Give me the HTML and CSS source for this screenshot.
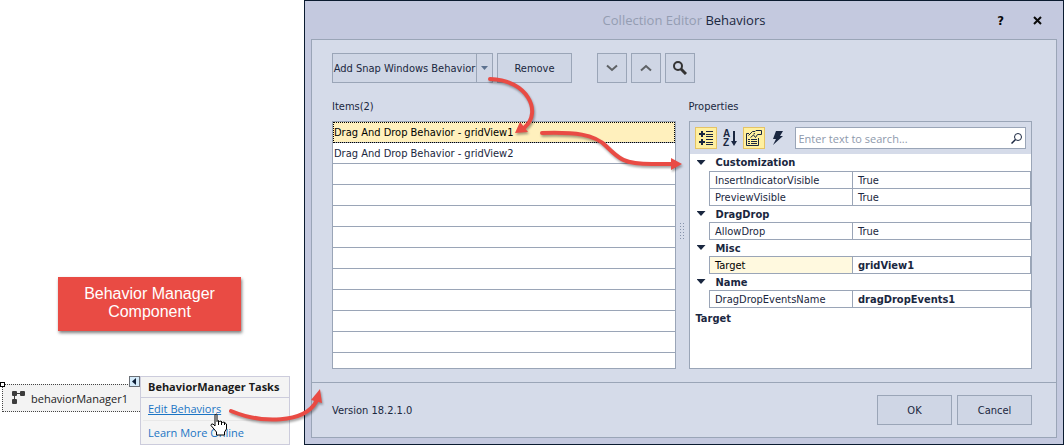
FILE: index.html
```html
<!DOCTYPE html>
<html lang="en">
<head>
    <meta charset="UTF-8">
    <meta name="viewport" content="width=device-width, initial-scale=1.0">
    <title>Collection Editor</title>
    <link rel="stylesheet" href="styles.css">
</head>
<body>
    <div class="designer">
        <div class="callout">Behavior Manager<br>Component</div>
        <div class="tray">
            <div class="component">
                <span class="handle"></span>
                <svg class="component-icon" width="14" height="14" viewBox="0 0 14 14">
                    <path d="M3 2.500H11M2.500 3V11" fill="none" stroke="#3c3c3c"/>
                    <rect x="0" y="0" width="5" height="5" rx="1" fill="#3c3c3c"/>
                    <rect x="8" y="0" width="5" height="5" rx="1" fill="#3c3c3c"/>
                    <rect x="0" y="8" width="5" height="5" rx="1" fill="#3c3c3c"/>
                </svg>
                <span>behaviorManager1</span>
                <button class="smart-tag" aria-label="Close tasks">
                    <svg width="9" height="9" viewBox="0 0 9 9"><path d="M6 1V8L2 4.500Z" fill="#0d1f36"/></svg>
                </button>
            </div>
            <div class="tasks">
                <h2>BehaviorManager Tasks</h2>
                <a class="active" href="#">Edit Behaviors</a>
                <a href="#">Learn More Online</a>
            </div>
        </div>
    </div>

    <div class="dialog">
        <div class="titlebar">
            <h1><span>Collection Editor</span> Behaviors</h1>
            <div class="window-buttons">
                <button aria-label="Help">?</button>
                <button aria-label="Close">
                    <svg width="9" height="9" viewBox="0 0 9 9"><path d="M1 1L8 8M8 1L1 8" stroke="#0a0a0a" stroke-width="2"/></svg>
                </button>
            </div>
        </div>
        <div class="content">
            <div class="main">
                <div class="toolbar">
                    <div class="split">
                        <button class="btn">Add Snap Windows Behavior</button>
                        <button class="btn drop" aria-label="More behaviors">
                            <svg width="7" height="4" viewBox="0 0 7 4"><path d="M0 0H7L3.500 4Z" fill="#5d7290"/></svg>
                        </button>
                    </div>
                    <button class="btn wide">Remove</button>
                    <div class="tools">
                        <button class="btn square" aria-label="Move down">
                            <svg width="12" height="8" viewBox="0 0 12 8"><path d="M1 1.500L6 6L11 1.500" fill="none" stroke="#5f6266" stroke-width="2"/></svg>
                        </button>
                        <button class="btn square" aria-label="Move up">
                            <svg width="12" height="8" viewBox="0 0 12 8"><path d="M1 6.500L6 2L11 6.500" fill="none" stroke="#5f6266" stroke-width="2"/></svg>
                        </button>
                        <button class="btn square" aria-label="Search">
                            <svg width="14" height="14" viewBox="0 0 14 14" fill="none" stroke="#333"><circle cx="5" cy="5" r="4" stroke-width="2"/><path d="M8 8L13 13" stroke-width="3"/></svg>
                        </button>
                    </div>
                </div>
                <div class="columns">
                    <div class="column">
                        <h3>Items(2)</h3>
                        <ul class="items">
                            <li class="selected">Drag And Drop Behavior - gridView1</li>
                            <li>Drag And Drop Behavior - gridView2</li>
                        </ul>
                    </div>
                    <div class="splitter"><span></span></div>
                    <div class="column">
                        <h3>Properties</h3>
                        <div class="properties">
                            <div class="prop-toolbar">
                                <button class="on" aria-label="Categorized">
                                    <svg width="14" height="14" viewBox="0 0 14 14" stroke="#1a2740" fill="none"><path d="M0 3H6M3 0V6M0 11H6M3 8V14" stroke-width="2"/><path d="M7 .5H14M7 3.500H14M7 5.500H14M7 8.500H14M7 11.500H14M7 13.500H14"/></svg>
                                </button>
                                <button aria-label="Alphabetical">
                                    <svg width="16" height="18" viewBox="0 0 16 18"><text class="sort-letter" x="1" y="8">A</text><text class="sort-letter" x="1" y="17">Z</text><path d="M12 2V14" stroke="#1a2740" stroke-width="2"/><path d="M9 12H15L12 17Z" fill="#1a2740"/></svg>
                                </button>
                                <button class="on" aria-label="Properties">
                                    <svg width="16" height="16" viewBox="0 0 16 16" stroke="#1a2740" fill="none"><path d="M3 3.500H.5V15.500H12.500V8"/><path d="M2 9.500H4M5 9.500H11M2 11.500H4M5 11.500H11M2 13.500H4M5 13.500H11"/><path d="M2.500 5.500L6.500 1.500H9L10 .5H15.500V4.500H11.500L9.500 7.500L7.500 5L4.500 7.500M7.500 4L9 3.500"/></svg>
                                </button>
                                <button aria-label="Events">
                                    <svg width="12" height="14" viewBox="0 0 12 14"><path d="M4 0H11L8 5H11L1 14L4 8H1Z" fill="#1a2740"/></svg>
                                </button>
                                <label class="search">
                                    <input type="text" placeholder="Enter text to search..." aria-label="Search properties">
                                    <svg width="11" height="11" viewBox="0 0 11 11" fill="none" stroke="#1a2740"><circle cx="7" cy="4" r="3.500"/><path d="M4.500 6.500L.5 10.500" stroke-width="1.500"/></svg>
                                </label>
                            </div>
                            <table>
                                <colgroup><col class="gutter"><col class="name"><col></colgroup>
                                <tr class="category"><td><button class="toggle" aria-label="Collapse"></button></td><th colspan="2">Customization</th></tr>
                                <tr class="property"><td></td><td>InsertIndicatorVisible</td><td>True</td></tr>
                                <tr class="property"><td></td><td>PreviewVisible</td><td>True</td></tr>
                                <tr class="category"><td><button class="toggle" aria-label="Collapse"></button></td><th colspan="2">DragDrop</th></tr>
                                <tr class="property"><td></td><td>AllowDrop</td><td>True</td></tr>
                                <tr class="category"><td><button class="toggle" aria-label="Collapse"></button></td><th colspan="2">Misc</th></tr>
                                <tr class="property current"><td></td><td>Target</td><td><b>gridView1</b></td></tr>
                                <tr class="category"><td><button class="toggle" aria-label="Collapse"></button></td><th colspan="2">Name</th></tr>
                                <tr class="property"><td></td><td>DragDropEventsName</td><td><b>dragDropEvents1</b></td></tr>
                            </table>
                            <p class="description">Target</p>
                        </div>
                    </div>
                </div>
            </div>
            <div class="footer">
                <span>Version 18.2.1.0</span>
                <button class="btn wide">OK</button>
                <button class="btn wide">Cancel</button>
            </div>
        </div>
    </div>

    <svg class="arrows" width="700" height="445" viewBox="0 0 700 445">
        <g class="arrow">
            <path d="M490 79C528 80 542 112 525 127"/>
            <polygon points="515,133 520,122 528,132"/>
        </g>
        <g class="arrow">
            <path d="M542 133C575 132 594 134 606 146C619 159 624 164 652 164H673"/>
            <polygon points="682,164 671,158 671,170"/>
        </g>
        <g class="arrow">
            <path d="M231 411C262 424 304 423 316 402"/>
            <polygon points="320,389 311,400 322,403"/>
        </g>
    </svg>
    <svg class="cursor" width="18" height="23" viewBox="0 0 18 23">
        <path d="M5.500 1.500Q6 .5 7 1.500V8.500L8 7.500L9.500 8.500L11 8L12.500 9.500L14 9L16.500 11V16L14.500 19V22H6.500V19L1 12.500Q1 10.500 3 11L5 13V1.500Z" fill="#fff" stroke="#000"/>
        <path d="M8.500 8V12M11.500 9V12M14.500 10V12" stroke="#000"/>
    </svg>
</body>
</html>
```
FILE: styles.css
```css
* {
    box-sizing: border-box;
}

body {
    position: relative;
    display: flex;
    min-height: 100vh;
    margin: 0;
    background-color: #fff;
    color: #1a2740;
    font-family: Tahoma, "DejaVu Sans Condensed", "DejaVu Sans", sans-serif;
    font-size: 11px;
}

h1, h2, h3, p, ul {
    margin: 0;
    padding: 0;
}

button {
    padding: 0;
    border: none;
    background: none;
    color: inherit;
    font: inherit;
}

svg {
    display: block;
}

/* Designer tray */
.designer {
    display: flex;
    flex: 0 0 304px;
    flex-direction: column;
    justify-content: flex-end;
}

.callout {
    width: 183px;
    margin: 0 0 45px 58px;
    padding: 8px 0 10px;
    background-color: #e94b44;
    box-shadow: 1px 2px 3px rgba(0, 0, 0, 0.5);
    color: #fff;
    font-family: "Liberation Sans", Arial, sans-serif;
    font-size: 16px;
    line-height: 18px;
    text-align: center;
}

.tray {
    display: flex;
    align-items: flex-start;
    font-family: "Open Sans", sans-serif;
}

.component {
    position: relative;
    display: flex;
    align-items: center;
    gap: 5px;
    width: 138px;
    height: 28px;
    margin: 8px 0 0 2px;
    padding-left: 9px;
    border: 1px dotted #444;
    border-right: none;
    background-color: #f3f3f3;
    color: #222;
}

.component-icon {
    flex: none;
}

.handle {
    position: absolute;
    top: -3px;
    left: -3px;
    width: 5px;
    height: 5px;
    border: 1px solid #000;
    background-color: #fff;
}

.smart-tag {
    position: absolute;
    top: -9px;
    right: 0;
    border: 1px solid #6b7077;
    background-color: #d5ebfa;
}

.tasks {
    width: 150px;
    border: 1px solid #ccccdc;
    background-color: #f4f4f4;
}

.tasks h2 {
    padding-left: 7px;
    border-bottom: 1px solid #ccccdc;
    color: #1b1b1b;
    font-size: 11px;
    line-height: 20px;
}

.tasks a {
    display: block;
    margin: 0 2px;
    padding-left: 5px;
    color: #1b74c4;
    line-height: 22px;
    text-decoration: none;
}

.tasks a + a {
    border-top: 1px solid #e8e8e8;
    line-height: 23px;
}

.tasks .active {
    text-decoration: underline;
}

/* Dialog */
.dialog {
    display: flex;
    flex: 1;
    flex-direction: column;
    padding: 0 6px 6px;
    border: 1px solid #0b1b30;
    background-color: #c4c9df;
}

.titlebar {
    display: grid;
    grid-template-columns: 1fr auto 1fr;
    align-items: center;
    height: 38px;
}

.titlebar h1 {
    grid-column: 2;
    font-family: "Open Sans", sans-serif;
    font-size: 13px;
    font-weight: normal;
}

.titlebar h1 span {
    color: #949db2;
}

.window-buttons {
    display: flex;
    align-items: center;
    justify-content: flex-end;
    gap: 29px;
    padding-right: 15px;
    color: #0a0a0a;
    font-size: 13px;
    font-weight: bold;
}

.content {
    display: flex;
    flex: 1;
    flex-direction: column;
    border: 1px solid #9aa5b7;
    background-color: #d5dbe9;
}

.main {
    display: flex;
    flex: 1;
    flex-direction: column;
    padding: 13px 24px 13px 20px;
}

.toolbar, .split, .tools {
    display: flex;
}

.toolbar {
    gap: 4px;
}

.tools {
    gap: 4px;
    margin-left: 21px;
}

.btn {
    display: flex;
    align-items: center;
    justify-content: center;
    height: 30px;
    border: 1px solid #9aa5b7;
    background-color: #cfd6e5;
    white-space: nowrap;
}

.split .btn:first-child {
    width: 145px;
}

.split .drop {
    width: 17px;
    margin-left: -1px;
}

.wide {
    width: 75px;
}

.square {
    width: 30px;
}

.columns {
    display: grid;
    flex: 1;
    grid-template-columns: 1fr 13px 1fr;
    margin-top: 10px;
}

.column {
    display: flex;
    flex-direction: column;
    min-width: 0;
}

.column h3 {
    font-size: 11px;
    font-weight: normal;
    line-height: 28px;
}

.items {
    flex: 1;
    border: 1px solid #9aa5b7;
    background: repeating-linear-gradient(#fff 0 20px, #9aa5b7 20px 21px);
    list-style: none;
}

.items li {
    height: 21px;
    padding-left: 1px;
    line-height: 22px;
}

.items .selected {
    border-bottom: 1px solid #9aa5b7;
    outline: 1px dotted #000;
    outline-offset: -1px;
    background-color: #fff0bd;
    color: #000;
}

.splitter {
    display: flex;
    align-items: center;
    justify-content: center;
}

.splitter span {
    width: 6px;
    height: 18px;
    background-image: radial-gradient(#8592ab 1px, transparent 1px);
    background-size: 3px 3px;
}

/* Property grid */
.properties {
    flex: 1;
    border: 1px solid #9aa5b7;
    background-color: #fff;
}

.prop-toolbar {
    display: flex;
    align-items: center;
    gap: 2px;
    padding: 5px;
    background-color: #d5dbe9;
}

.prop-toolbar button {
    display: flex;
    align-items: center;
    justify-content: center;
    width: 22px;
    height: 22px;
}

.prop-toolbar .on {
    border: 1px solid #e5c365;
    background-color: #fff09f;
}

.sort-letter {
    fill: #1a2740;
    font-family: "Liberation Sans", Arial, sans-serif;
    font-size: 10px;
    font-weight: bold;
}

.search {
    display: flex;
    flex: 1;
    align-items: center;
    height: 22px;
    margin-left: 4px;
    padding: 0 3px;
    border: 1px solid #9aa5b7;
    background-color: #fff;
}

.search input {
    flex: 1;
    min-width: 0;
    padding: 0;
    border: none;
    outline: none;
    background: none;
    font-family: "Open Sans", sans-serif;
    font-size: 11px;
}

.search input::placeholder {
    color: #8e99ac;
}

table {
    width: 100%;
    border-collapse: collapse;
    table-layout: fixed;
}

tr {
    height: 17px;
}

td, th {
    padding: 1px 0 0 5px;
    line-height: 15px;
    text-align: left;
}

td:first-child {
    padding: 0 0 0 7px;
}

.gutter {
    width: 20px;
}

.name {
    width: 143px;
}

.category th {
    padding-left: 6px;
}

.property td + td {
    border: 1px solid #9aa5b7;
}

.current td:nth-child(2) {
    background-color: #fff9df;
    color: #000;
}

.toggle {
    display: block;
    width: 9px;
    height: 5px;
    background-color: #1a2740;
    clip-path: polygon(0 0, 100% 0, 50% 100%);
}

.description {
    padding: 2px 6px;
    font-weight: bold;
    line-height: 17px;
}

.footer {
    display: flex;
    align-items: center;
    gap: 5px;
    height: 55px;
    padding: 0 24px 0 20px;
    border-top: 1px solid #9aa5b7;
}

.footer span {
    flex: 1;
}

/* Annotations */
.arrows {
    position: absolute;
    top: 0;
    left: 0;
    pointer-events: none;
}

.arrow {
    filter: drop-shadow(1px 2px 1px rgba(0, 0, 0, 0.35));
}

.arrow path {
    fill: none;
    stroke: #e94b44;
    stroke-linecap: round;
    stroke-width: 4;
}

.arrow polygon {
    fill: #e94b44;
}

.cursor {
    position: absolute;
    top: 413px;
    left: 210px;
    pointer-events: none;
}
```
